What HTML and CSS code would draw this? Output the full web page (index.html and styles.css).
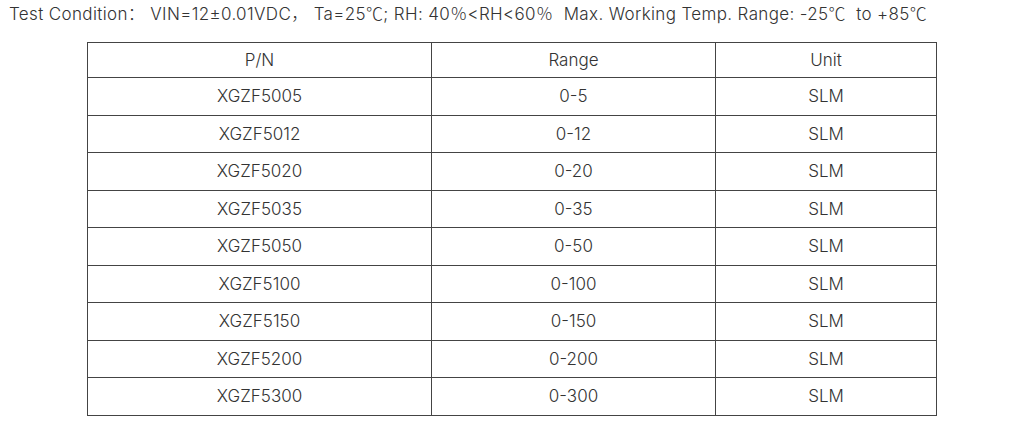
FILE: index.html
```html
<!DOCTYPE html>
<html>
<head>
<meta charset="utf-8">
<link rel="stylesheet" href="styles.css">
</head>
<body>
<div class="cond">Test Condition：&nbsp;VIN=12±0.01VDC，&nbsp;Ta=25<span class="fw">℃</span>; RH: 40<span class="fw">％</span>&lt;RH&lt;60<span class="fw">％</span>&nbsp; Max. Working Temp. Range: -25<span class="fw">℃</span>&nbsp; to +85<span class="fw">℃</span></div>
<table class="spec">
<colgroup><col class="c1"><col class="c2"><col class="c3"></colgroup>
<tr class="head"><td>P/N</td><td>Range</td><td>Unit</td></tr>
<tr><td>XGZF5005</td><td>0-5</td><td>SLM</td></tr>
<tr><td>XGZF5012</td><td>0-12</td><td>SLM</td></tr>
<tr><td>XGZF5020</td><td>0-20</td><td>SLM</td></tr>
<tr><td>XGZF5035</td><td>0-35</td><td>SLM</td></tr>
<tr><td>XGZF5050</td><td>0-50</td><td>SLM</td></tr>
<tr><td>XGZF5100</td><td>0-100</td><td>SLM</td></tr>
<tr><td>XGZF5150</td><td>0-150</td><td>SLM</td></tr>
<tr><td>XGZF5200</td><td>0-200</td><td>SLM</td></tr>
<tr><td>XGZF5300</td><td>0-300</td><td>SLM</td></tr>
</table>
</body>
</html>
```
FILE: styles.css
```css
html, body { margin: 0; padding: 0; background: #fff; }
body {
  font-family: Inter, "Noto Sans CJK SC", sans-serif;
  font-weight: 300;
  color: #333;
  font-size: 17px;
}
.cond {
  padding: 1px 0 0 9px;
  height: 41px;
  line-height: 24px;
  white-space: nowrap;
  letter-spacing: 0.36px;
}
.fw {
  font-family: "Noto Sans CJK SC", sans-serif;
  font-weight: 300;
}
.spec {
  margin-left: 87px;
  border-collapse: collapse;
  font-size: 17px;
}
.c1 { width: 344px; }
.c2 { width: 284px; }
.c3 { width: 221px; }
.spec td {
  border: 1px solid #444;
  height: 36.5px;
  padding: 0;
  text-align: center;
  vertical-align: middle;
  line-height: 20px;
}
.spec .head td { height: 34px; }
```
